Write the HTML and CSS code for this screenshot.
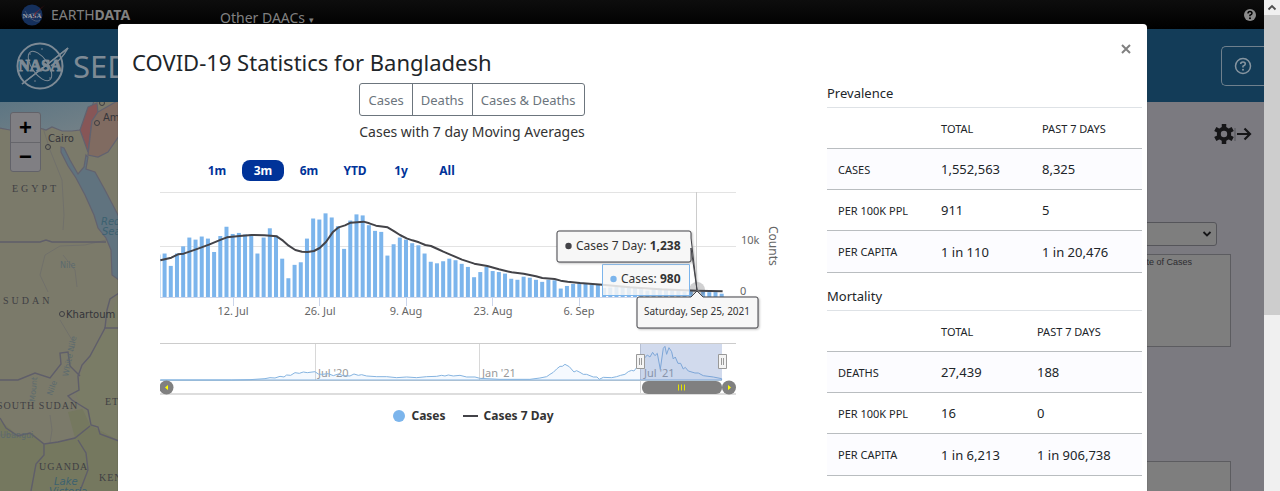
FILE: index.html
```html
<!DOCTYPE html>
<html lang="en">
<head>
<meta charset="utf-8">
<title>COVID-19 Statistics</title>
<link rel="stylesheet" href="styles.css">
</head>
<body>
<div class="window">
  <div class="page">
    <header class="topbar">
      <a class="earthdata" href="#">
        <svg class="meatball" viewBox="0 0 26 22" aria-hidden="true">
          <circle cx="12" cy="11" r="10.500" fill="#15305c"/>
          <path d="M3 15C8 10 15 8 21 10M5 7C10 16 17 19 20 16" fill="none" stroke="#56657d" stroke-width=".7"/>
          <text x="12" y="14" text-anchor="middle" class="meatball-text">NASA</text>
          <path d="M25 1L16 9L13 17L15 9Z" fill="#8a2028"/>
        </svg>
        <span>EARTH<b>DATA</b></span>
      </a>
      <a class="daacs" href="#">Other DAACs <small>▾</small></a>
      <button class="help-small" aria-label="Help">
        <svg viewBox="0 0 14 14"><circle cx="7" cy="7" r="6" fill="#8c8c8c"/><path d="M5 5.500Q5 3.500 7 3.500T9 5.300Q9 6.500 7 7.200V8.300" fill="none" stroke="#000" stroke-width="1.500"/><circle cx="7" cy="10.300" r="1" fill="#000"/></svg>
      </button>
    </header>
    <div class="brandbar">
      <a class="brand" href="#">
        <svg class="nasa" viewBox="0 0 56 52" aria-hidden="true">
          <g fill="none" stroke="#7d8a95">
            <circle cx="25" cy="26" r="22.500" stroke-width="2"/>
            <ellipse cx="25" cy="26" rx="8" ry="17" transform="rotate(-35 25 26)" stroke-width="1"/>
            <path d="M7 44C20 34 38 20 53 8C44 24 40 22 36 26" stroke-width="1.500"/>
            <path d="M7 44C20 34 38 20 53 8" stroke-width="1.500"/>
          </g>
          <text x="25" y="31" text-anchor="middle" class="nasa-text">NASA</text>
          <g fill="#7d8a95"><circle cx="15" cy="14" r=".8"/><circle cx="27" cy="9" r=".8"/><circle cx="35" cy="38" r=".8"/><circle cx="20" cy="41" r=".8"/></g>
        </svg>
        <span>SEDAC</span>
      </a>
      <button class="help-large" aria-label="Help">
        <svg viewBox="0 0 18 18"><circle cx="9" cy="9" r="7.500" fill="none" stroke="#8795a0" stroke-width="1.500"/><path d="M6.700 7Q6.700 5 9 5T11.300 7Q11.300 8.200 9 9.200V10.500" fill="none" stroke="#8795a0" stroke-width="1.600"/><circle cx="9" cy="12.700" r="1" fill="#8795a0"/></svg>
      </button>
    </div>
    <main class="workspace">
      <section class="map" aria-label="Map">
        <svg class="map-art" viewBox="0 102 140 389">
          <defs><linearGradient id="sea" x1="0" y1="0" x2="1" y2="1"><stop offset="0" stop-color="#5c7583"/><stop offset="1" stop-color="#748187"/></linearGradient></defs>
          <path d="M68 412L86 408L100 430L118 440V491H0V420L18 436L32 433L45 444L75 438Z" fill="#75785f"/>
          <path d="M118 295L106 330L92 352L80 375L76 395L90 425L118 440Z" fill="#7a7c66"/>
          <g stroke="#62626f" stroke-width="1.200">
            <path d="M-1 128L10 130L22 131L36 127L46 130L52 127L62 131L72 131L80 130L88 118L94 101H-1Z" fill="url(#sea)" />
            <path d="M88 107L97 103L98 113L92 121L88 152L80 130Z" fill="#875657"/>
            <path d="M98 112L119 100V136L108 152L98 157L88 155L92 121Z" fill="#806b61"/>
            <path d="M61 147L64 148L70 160L78 174L84 167L86 155L88 157L86 169L95 172L105 190L119 217V280L112 275L111 250L106 238L98 228L94 215L85 195L76 178L68 166L61 152Z" fill="#60737f"/>
          </g>
          <g fill="none" stroke="#696a6c" stroke-width=".600">
            <path d="M43 128L50 150L62 180L64 215L63 230M106 240L85 245L60 246L45 255L40 275L48 292M63 255L75 270L77 287M60 320L75 345L72 352M50 415L52 430L50 443M0 435L30 434"/>
          </g>
          <g fill="none" stroke="#5f5e6a" stroke-width="1.400">
            <path d="M0 242H40L46 240L52 242H106"/>
            <path d="M119 293L110 299L107 310L105 328L97 343L90 356L82 365L78 376L79 390L68 396L72 400L80 405L88 410L91 425L98 427L100 434L119 441M104 328H119"/>
            <path d="M0 380H18L35 373L50 378L61 364L60 353L68 352L70 366L80 376"/>
            <path d="M0 418L6 428L18 436L30 433L44 444L58 442L75 438L90 426M44 444L44 455L36 464L31 491M78 440L86 453L88 470L80 491"/>
          </g>
          <g fill="none" stroke="#3d3d42"><circle cx="48" cy="147" r="2.500"/><circle cx="97" cy="123" r="2.500"/><circle cx="62" cy="314" r="2.500"/><circle cx="102" cy="103" r="2.500"/></g>
          <g class="city"><text x="48" y="142">Cairo</text><text x="103" y="121">Amman</text><text x="66" y="318">Khartoum</text></g>
          <g class="country"><text x="12" y="192">EGYPT</text><text x="3" y="304">SUDAN</text></g>
          <g class="country tight"><text x="-3" y="409">SOUTH SUDAN</text><text x="39" y="470">UGANDA</text><text x="105" y="405">ETHIOPIA</text><text x="99" y="481">KENYA</text></g>
          <g class="water"><text x="101" y="225">Red</text><text x="102" y="235">Sea</text><text x="54" y="485">Lake</text><text x="49" y="495">Victoria</text></g>
          <g class="river"><text x="60" y="268">Nile</text><text x="0" y="438">Ubangui</text><text transform="translate(68 377) rotate(-78)">White Nile</text><text transform="translate(35 402) rotate(-85)">Mount</text><text transform="translate(52 396) rotate(-70)">Nile</text></g>
        </svg>
        <div class="zoom">
          <button aria-label="Zoom in">+</button>
          <button aria-label="Zoom out">−</button>
        </div>
      </section>
      <aside class="panel">
        <svg class="tools" viewBox="0 0 38 20" aria-hidden="true">
          <circle cx="10" cy="10" r="5.200" fill="none" stroke="#161618" stroke-width="4"/>
          <path d="M10 0V4M10 16V20M1.300 5L5 7M15 13L18.700 15M1.300 15L5 13M15 7L18.700 5" stroke="#161618" stroke-width="4.500"/>
          <path d="M21 4V17" stroke="#55555a"/>
          <path d="M23 10H36M30.500 4.500L36 10L30.500 15.500" fill="none" stroke="#161618" stroke-width="2.200"/>
        </svg>
        <div class="select-wrap">
          <select aria-label="Layer"><option></option></select>
          <svg viewBox="0 0 10 8" aria-hidden="true"><path d="M1.500 2L5 5.500L8.500 2" fill="none" stroke="#161618" stroke-width="1.800"/></svg>
        </div>
        <div class="legend-box">Rate of Cases</div>
        <div class="legend-box second"></div>
      </aside>
    </main>

    <div class="overlay">
      <div class="modal" role="dialog" aria-labelledby="modal-title">
        <header class="modal-header">
          <h1 id="modal-title">COVID-19 Statistics for Bangladesh</h1>
          <button class="close" aria-label="Close">
            <svg viewBox="0 0 10 10"><path d="M1 1L9 9M9 1L1 9" stroke="#808080" stroke-width="2"/></svg>
          </button>
        </header>
        <div class="modal-body">
          <section class="chart">
            <div class="group">
              <button>Cases</button><button>Deaths</button><button>Cases &amp; Deaths</button>
            </div>
            <h2>Cases with 7 day Moving Averages</h2>
            <div class="ranges">
              <button>1m</button><button class="active">3m</button><button>6m</button><button>YTD</button><button>1y</button><button>All</button>
            </div>
            <svg class="plot" viewBox="0 0 652 215" role="img" aria-label="Daily cases and seven day average">
              <path d="M0 7.500H576M0 61.500H576" stroke="#e3e3e3" fill="none"/>
              <clipPath id="plot-area"><path d="M0 0H576V113H0Z"/></clipPath>
              <g id="bars" fill="#7cb5ec" clip-path="url(#plot-area)"></g>
              <path d="M0 112.500H576M73.500 113V121M159.500 113V121M246.500 113V121M332.500 113V121M419.500 113V121" stroke="#ccd6eb" fill="none"/>
              <path d="M536.500 7V112" stroke="#cccccc"/>
              <path transform="translate(-10 0) scale(.3333)" fill="none" stroke="#434348" stroke-width="6" stroke-linejoin="round" d="M31 226L64 218L84 208L101 206L138 193L177 179L213 164L231 157L269 153L305 150L343 151L380 154L399 167L416 182L436 195L456 200L473 201L492 198L509 189L528 171L548 142L566 127L585 121L602 113L641 110L658 115L678 122L713 127L733 139L750 150L770 160L787 166L807 172L826 180L843 183L863 192L880 200L899 208L936 224L973 236L1012 243L1047 253L1085 262L1121 266L1158 274L1177 279L1214 282L1232 287L1253 290L1290 294L1357 299L1440 307L1530 313L1641 317L1718 319"/>
              <g class="axis"><text x="73" y="130">12. Jul</text><text x="160" y="130">26. Jul</text><text x="246" y="130">9. Aug</text><text x="333" y="130">23. Aug</text><text x="419" y="130">6. Sep</text></g>
              <g class="axis left"><text x="581" y="59">10k</text><text x="580" y="110">0</text></g>
              <text class="counts" transform="translate(609 41) rotate(90)">Counts</text>

              <circle cx="537" cy="105" r="8" fill="#434348" opacity=".25"/>
              <path d="M442.500 79.500H529.500V110.500H442.500Z" fill="#f7f7f7" fill-opacity=".85" stroke="#7cb5ec"/>
              <circle cx="453.500" cy="94" r="3.200" fill="#7cb5ec"/>
              <text class="tip" x="461" y="98">Cases: <tspan>980</tspan></text>
              <path class="tip-box" d="M399 46H529Q531 46 531 48V53L537 105L531 63V75Q531 77 529 77H399Q397 77 397 75V48Q397 46 399 46Z"/>
              <circle cx="408.500" cy="61" r="3.200" fill="#434348"/>
              <text class="tip" x="416" y="65">Cases 7 Day: <tspan>1,238</tspan></text>
              <path class="tip-box" d="M479 112H531L537 106L543 112H596Q598 112 598 114V141Q598 143 596 143H479Q477 143 477 141V114Q477 112 479 112Z"/>
              <text class="tip date" x="537" y="130">Saturday, Sep 25, 2021</text>

              <path d="M0 158.500H576M0 195.500H562" stroke="#cccccc" fill="none"/>
              <path d="M155.500 159V195M319.500 159V195M480.500 159V208" stroke="#d8d8d8" fill="none"/>
              <path d="M0 209H576" stroke="#dddddd" stroke-width="2"/>
              <g class="axis left nav"><text x="158" y="192">Jul '20</text><text x="322" y="192">Jan '21</text><text x="484" y="192">Jul '21</text></g>
              <path transform="translate(-10 150) scale(.3333)" fill="#7cb5ec" fill-opacity=".08" stroke="#86b4e0" stroke-width="3" d="M31 135H245L300 134L345 131L360 128L375 129L390 124L402 126L410 120L422 121L435 113L448 115L460 111L472 113L495 110L505 117L515 118L535 116L550 122L565 117L580 122L600 123L612 117L625 121L635 119L650 123L680 125L710 125L740 128L770 126L800 128L830 125L860 124L875 121L885 123L895 120L910 123L930 121L950 126L975 126L990 130L1050 133H1140L1170 129L1190 125L1200 118L1210 112L1220 102L1230 94L1237 94L1245 88L1258 95L1272 111L1280 107L1290 112L1300 118L1310 118L1330 126L1341 126L1348 133L1360 127L1385 128L1400 125L1412 121L1425 118L1435 110L1445 106L1452 108L1460 98L1470 85L1477 76L1485 68L1492 60L1500 66L1508 52L1515 62L1522 55L1531 103L1540 40L1545 34L1550 58L1557 38L1565 50L1570 72L1576 66L1584 85L1592 85L1600 102L1606 97L1615 108L1635 114L1645 114L1660 122L1690 126L1715 131V135Z"/>
              <path d="M480 159H562V195H480Z" fill="#6685c2" fill-opacity=".3"/>
              <g fill="#f4f4f4" stroke="#999999"><path d="M476.500 169.500H484.500V183.500H476.500ZM558.500 169.500H566.500V183.500H558.500Z"/><path d="M479.500 173V180M481.500 173V180M561.500 173V180M563.500 173V180"/></g>
              <rect x="482" y="196" width="80" height="13" rx="6" fill="#808080"/>
              <circle cx="6.500" cy="202.500" r="7" fill="#808080"/><circle cx="569" cy="202.500" r="7" fill="#808080"/>
              <path d="M8 200V205L5 202.500ZM568 200V205L571 202.500Z" fill="#ffff00"/>
              <path d="M518.500 199.500V205.500M521.500 199.500V205.500M524.500 199.500V205.500" stroke="#e4e400"/>
            </svg>
            <div class="legend">
              <button><i class="dot"></i>Cases</button>
              <button><i class="dash"></i>Cases 7 Day</button>
            </div>
          </section>
          <section class="stats">
            <table>
              <caption>Prevalence</caption>
              <thead><tr><td></td><th>TOTAL</th><th>PAST 7 DAYS</th></tr></thead>
              <tbody>
                <tr><th>CASES</th><td>1,552,563</td><td>8,325</td></tr>
                <tr><th>PER 100K PPL</th><td>911</td><td>5</td></tr>
                <tr><th>PER CAPITA</th><td>1 in 110</td><td>1 in 20,476</td></tr>
              </tbody>
            </table>
            <table class="mortality">
              <caption>Mortality</caption>
              <thead><tr><td></td><th>TOTAL</th><th>PAST 7 DAYS</th></tr></thead>
              <tbody>
                <tr><th>DEATHS</th><td>27,439</td><td>188</td></tr>
                <tr><th>PER 100K PPL</th><td>16</td><td>0</td></tr>
                <tr><th>PER CAPITA</th><td>1 in 6,213</td><td>1 in 906,738</td></tr>
              </tbody>
            </table>
          </section>
        </div>
      </div>
    </div>
  </div>
  <div class="scrollbar" aria-hidden="true">
    <svg viewBox="0 0 16 15"><path d="M4.500 9.500L8 6L11.500 9.500" fill="none" stroke="#505050" stroke-width="1.800"/></svg>
    <div class="thumb"></div>
  </div>
</div>
<script src="chart.js"></script>
</body>
</html>
```
FILE: styles.css
```css
* { box-sizing: border-box; }
body { margin: 0; font-family: "Noto Sans", sans-serif; color: #212529; overflow: hidden; }
button { font: inherit; color: inherit; background: none; border: 0; padding: 0; }
a { text-decoration: none; color: inherit; }
svg { display: block; }

.window { display: flex; height: 100vh; overflow: hidden; }
.page { flex: 1; position: relative; display: flex; flex-direction: column; overflow: hidden; }

.topbar { display: flex; align-items: center; flex: none; height: 29px; padding: 0 7px 0 20px; background: linear-gradient(#0d0d0d, #000000); color: #808080; }
.earthdata { display: flex; align-items: center; gap: 5px; width: 200px; font-size: 14px; line-height: 20px; }
.meatball { width: 26px; height: 22px; }
.meatball-text { font: bold 7px "Liberation Serif", serif; fill: #a3a3aa; }
.daacs { align-self: flex-end; font-size: 14px; line-height: 18px; }
.daacs small { font-size: 9px; }
.help-small { margin-left: auto; width: 14px; }

.brandbar { display: flex; align-items: center; flex: none; height: 73px; padding-left: 15px; background: #133c58; }
.brand { display: flex; align-items: center; gap: 2px; font-size: 31px; color: #7d8a95; }
.nasa { width: 56px; height: 52px; }
.nasa-text { font: bold 16px "Liberation Serif", serif; fill: #7d8a95; stroke: #7d8a95; stroke-width: 1px; }
.help-large { display: flex; align-items: center; justify-content: center; margin-left: auto; width: 43px; height: 40px; border: 1px solid #6f808d; border-right: 0; border-radius: 5px 0 0 5px; }
.help-large svg { width: 18px; }

.workspace { display: flex; flex: 1; min-height: 0; }
.map { position: relative; flex: 1; background: #7b7a6a; overflow: hidden; }
.map-art { width: 140px; }
.city { font: 10px "DejaVu Sans", sans-serif; fill: #35353a; }
.country { font: 10px "Liberation Serif", serif; fill: #3f3f44; letter-spacing: 3px; }
.country.tight { letter-spacing: 1px; }
.water { font: italic 10px "DejaVu Sans", sans-serif; fill: #3c6170; }
.river { font: 8px "DejaVu Sans", sans-serif; fill: #5c6a6e; }
.zoom { position: absolute; left: 10px; top: 10px; display: flex; flex-direction: column; width: 31px; border: 1px solid #626269; border-radius: 3px; background: #807f83; }
.zoom button { height: 29px; font: bold 22px/28px "Liberation Sans", sans-serif; color: #000000; }
.zoom button + button { border-top: 1px solid #66666b; }

.panel { flex: 1; display: flex; flex-direction: column; padding: 22px 33px 0 60px; background: #7b7a80; }
.tools { align-self: flex-end; flex: none; width: 38px; height: 20px; margin-right: -21px; }
.select-wrap { display: grid; align-items: center; flex: none; margin: 78px 14px 8px 0; }
.select-wrap > * { grid-area: 1 / 1; }
.select-wrap select { width: 100%; height: 24px; border: 1px solid #55555a; border-radius: 3px; background: #7e7e7e; appearance: none; }
.select-wrap svg { justify-self: end; width: 10px; margin-right: 5px; }
.legend-box { flex: none; height: 93px; padding-right: 38px; border: 1px solid #5c5c60; background: #7e7e7e; font: 9px/14px "Liberation Sans", sans-serif; color: #2c2c30; text-align: right; }
.tools + .select-wrap { margin-top: 78px; }
.second { margin-top: 114px; }

.overlay { position: absolute; inset: 0; padding: 24px 117px 0 118px; overflow: hidden; }
.modal { min-height: 100vh; padding: 0 5px 0 14px; border-radius: 4px 4px 0 0; background: #ffffff; box-shadow: 0 0 1px #333333; }
.modal-header { display: flex; justify-content: space-between; align-items: flex-start; padding: 20px 11px 3px 0; }
h1 { margin: 0; font-size: 22px; line-height: 36px; font-weight: 400; }
.close { width: 10px; }
.close svg { width: 10px; }
.modal-body { display: grid; grid-template-columns: minmax(0, 1fr) 315px; gap: 15px; }

.chart { display: flex; flex-direction: column; align-items: center; }
.group { display: flex; height: 33px; border: 1px solid #6c757d; border-radius: 3px; font-size: 13px; color: #6c757d; }
.group button { padding: 0 8px; }
.group button + button { border-left: 1px solid #6c757d; }
h2 { margin: 6px 0 18px; font-size: 14px; line-height: 20px; font-weight: 400; color: #333333; }
.ranges { display: flex; gap: 4px; align-self: flex-start; margin: 0 0 4px 64px; font-size: 12px; font-weight: 700; color: #003399; }
.ranges button { width: 42px; height: 21px; border-radius: 8px; }
.ranges .active { background: #003399; color: #ffffff; }
.plot { align-self: stretch; margin-left: 28px; }
.axis { font-size: 11px; fill: #666666; text-anchor: middle; }
.axis.left { text-anchor: start; }
.axis.nav { fill: #999999; }
.counts { font-size: 12px; fill: #666666; }
.tip { font-size: 12px; fill: #333333; }
.tip tspan { font-weight: 700; }
.tip.date { font-size: 10px; text-anchor: middle; }
.tip-box { fill: #f7f7f7; stroke: #434348; stroke-width: 1; filter: drop-shadow(1px 1px 1px #bbbbbb); }
.legend { display: flex; gap: 17px; margin-top: 6px; padding-left: 3px; font-size: 12px; line-height: 20px; font-weight: 700; color: #333333; }
.legend button { display: flex; align-items: center; gap: 6px; }
.dot { width: 12px; height: 12px; border-radius: 50%; background: #7cb5ec; }
.dash { width: 15px; height: 2px; background: #434348; }

table { width: 100%; border-collapse: collapse; table-layout: fixed; font-size: 13px; }
caption { padding: 0 0 4px; font-size: 13px; line-height: 20px; text-align: left; }
tr { height: 41px; border-top: 1px solid #b9bdc0; }
thead tr { border-top-color: #dee2e6; }
tbody tr:nth-child(odd) { background: #fcfcff; }
tbody tr:last-child { height: 42px; border-bottom: 1px solid #b9bdc0; }
th, td { padding: 0; text-align: left; font-weight: 400; }
th { font-size: 11px; }
tr > :first-child { width: 114px; padding-left: 11px; }
tr > :nth-child(2) { width: 101px; }
.mortality tr > :nth-child(2) { width: 96px; }
.mortality caption { padding-top: 13px; }

.scrollbar { width: 16px; background: #f0f0f0; }
.thumb { height: 61%; background: #cdcdcd; }
```
FILE: chart.js
```js
// Daily case counts in hundreds, starting 30 June.
const cases = [
  83, 85, 61, 85, 99, 116, 112, 118, 114, 88, 119, 137, 123, 125, 122, 122, 85, 116, 134, 120,
  75, 37, 63, 68, 114, 153, 151, 163, 155, 138, 94, 149, 161, 159, 140, 129, 127, 81, 103, 116,
  112, 105, 101, 85, 69, 66, 70, 75, 72, 65, 59, 39, 49, 59, 51, 49, 46, 36, 34, 40,
  38, 34, 30, 34, 33, 17, 22, 26, 29, 26, 25, 24, 18, 19, 20, 21, 20, 19, 16, 13,
  17, 18, 16, 15, 13, 11, 12, 10, 11, 10, 10, 7
];
const bars = document.getElementById("bars");
const step = 6.19;
const unit = 0.515;
cases.forEach((count, day) => {
  const bar = document.createElementNS("http://www.w3.org/2000/svg", "rect");
  const height = count * unit;
  bar.setAttribute("x", day * step - 3.6);
  bar.setAttribute("y", 112.3 - height);
  bar.setAttribute("width", 4);
  bar.setAttribute("height", height);
  bars.appendChild(bar);
});
```
